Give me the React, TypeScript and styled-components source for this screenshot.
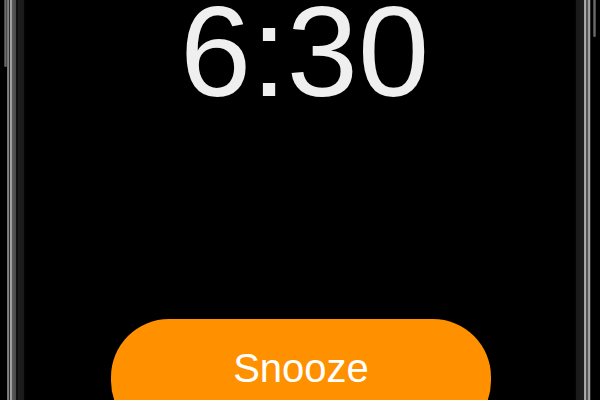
import React from 'react'
import styled, { createGlobalStyle } from 'styled-components'

const GlobalStyle = createGlobalStyle`
  html, body {
    margin: 0;
    padding: 0;
    background: #000;
  }
  #root {
    width: 600px;
    height: 400px;
    overflow: hidden;
  }
`

const Screen = styled.div`
  display: flex;
  width: 600px;
  height: 400px;
  background: #000;
  overflow: hidden;
`

type BezelTypes = {
  side: 'left' | 'right'
}

// thin metal stripes of the phone's rim
const leftStripes = `linear-gradient(to right,
  #000 0px, #000 7px,
  #6e6e6e 7px, #8a8a8a 9px,
  #2a2a2a 9px, #2a2a2a 10px,
  #a8a8a8 10px, #9a9a9a 12px,
  #5a5a5a 12px, #4a4a4a 16px,
  #111 16px, #111 18px,
  #1d1d1d 18px, #1a1a1a 24px,
  #050505 24px, #000 26px)`

const rightStripes = `linear-gradient(to left,
  #000 0px, #000 9px,
  #2a2a2a 9px, #2a2a2a 10px,
  #a8a8a8 10px, #9a9a9a 12px,
  #5a5a5a 12px, #505050 14px,
  #b0b0b0 14px, #a0a0a0 16px,
  #1d1d1d 16px, #1a1a1a 24px,
  #050505 24px, #000 26px)`

const Bezel = styled.div<BezelTypes>`
  position: relative;
  flex: 0 0 26px;
  height: 100%;
  background: ${({ side }) => (side === 'left' ? leftStripes : rightStripes)};
`

const SideButton = styled.div<BezelTypes>`
  position: absolute;
  top: 0;
  width: 3px;
  border-radius: 0 0 2px 2px;
  background: linear-gradient(to right, #3a3a3a, #6a6a6a, #3a3a3a);
  ${({ side }) =>
    side === 'left'
      ? 'left: 4px; height: 67px;'
      : 'right: 4px; height: 37px;'}
`

const Display = styled.div`
  flex: 1;
  display: flex;
  flex-direction: column;
  align-items: center;
`

const Time = styled.div`
  font-family: 'Liberation Sans', Arial, sans-serif;
  font-size: 128px;
  line-height: 0.8;
  color: #efefef;
  margin-top: 1px;
  margin-left: 9px;
`

const Spacer = styled.div`
  flex: 1;
`

const SnoozeButton = styled.button`
  width: 380px;
  height: 120px;
  margin-bottom: -39px;
  margin-left: 2px;
  border: none;
  border-radius: 58px;
  background: #ff9000;
  color: #fff;
  font-family: 'Liberation Sans', Arial, sans-serif;
  font-size: 40px;
  display: flex;
  justify-content: center;
  padding-top: 27px;
  box-sizing: border-box;
`

const App = () => {
  return (
    <>
      <GlobalStyle />
      <Screen>
        <Bezel side="left">
          <SideButton side="left" />
        </Bezel>
        <Display>
          <Time>6:30</Time>
          <Spacer />
          <SnoozeButton>Snooze</SnoozeButton>
        </Display>
        <Bezel side="right">
          <SideButton side="right" />
        </Bezel>
      </Screen>
    </>
  )
}

export default App
